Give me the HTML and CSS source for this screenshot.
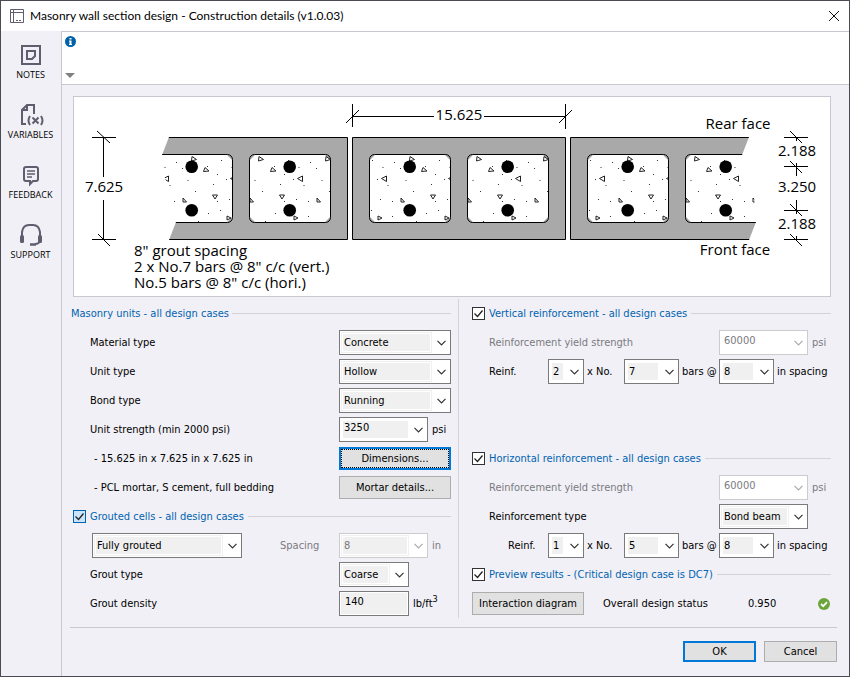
FILE: index.html
```html
<!DOCTYPE html>
<html lang="en">
<head>
<meta charset="utf-8">
<title>Masonry wall section design</title>
<link rel="stylesheet" href="styles.css">
</head>
<body>
<div class="window">
  <header class="titlebar">
    <svg class="app-icon" width="14" height="14" viewBox="0 0 14 14" fill="none" stroke="#5f5e6e"><path d="M.5.5h13v13H.5zM3.5.5v13M.5 3.5h13M6 11.5h2M9 11.5h2"/></svg>
    <h1>Masonry wall section design - Construction details (v1.0.03)</h1>
    <button class="close" aria-label="Close"><svg width="12" height="12" viewBox="0 0 12 12" stroke="#111"><path d="M1 1l10 10M11 1L1 11"/></svg></button>
  </header>
  <div class="body">
    <nav class="sidebar">
      <button><svg width="26" height="24" viewBox="0 0 26 24" fill="none" stroke="#5f5e6e" stroke-width="2"><path d="M4 3h18v18H4zM9 8h8v5l-3 3H9z"/></svg>NOTES</button>
      <button><svg width="26" height="24" viewBox="0 0 26 24" fill="none" stroke="#5f5e6e" stroke-width="2"><path d="M8 21H4V7l5-5h7v9M4 7h5V2"/><path d="M12 13q-3 4.500 0 9M23 13q3 4.500 0 9M14.500 14.500l6 6M20.500 14.500l-6 6"/></svg>VARIABLES</button>
      <button><svg width="26" height="24" viewBox="0 0 26 24" fill="none" stroke="#5f5e6e" stroke-width="2"><path d="M8 4h10q2 0 2 2v10q0 2-2 2h-3l-3 3v-3H8q-2 0-2-2V6q0-2 2-2z"/><path d="M9 8h8M9 11h8M9 14h5" stroke-width="1.500"/></svg>FEEDBACK</button>
      <button><svg width="26" height="24" viewBox="0 0 26 24" fill="none" stroke="#5f5e6e" stroke-width="2"><path d="M4 13V9q1-7 7-7h4q6 0 7 7v4M22 18q-1 3-5 3"/><rect x="2" y="12" width="4" height="8" rx="1.500" fill="#5f5e6e" stroke="none"/><rect x="20" y="12" width="4" height="8" rx="1.500" fill="#5f5e6e" stroke="none"/><path d="M12 21.500h6" stroke-width="2.500"/></svg>SUPPORT</button>
    </nav>
    <main>
      <section class="info">
        <svg width="11" height="11" viewBox="0 0 11 11"><circle cx="5.500" cy="5.500" r="5.500" fill="#0060a8"/><path d="M4.500 2h2v1.500h-2zM4 4.500h2.500V8H7v1H4V8h.5V5.500H4z" fill="#fff"/></svg>
        <svg width="10" height="5" viewBox="0 0 10 5"><path d="M0 0h10L5 5z" fill="#808080"/></svg>
      </section>
      <div class="content">
        <figure class="diagram">
          <svg viewBox="74 97 756 199" role="img" aria-label="Wall section">
            <defs>
              <pattern id="grout" x="369" y="0" width="67" height="300" patternUnits="userSpaceOnUse">
                <g transform="translate(-369 0)">
                  <path fill="none" stroke="#222" d="M410 156.500L414.500 159.500 409.500 161zM423 167.500L427 171 421.500 171.500zM381.500 178.500L386.500 176V181.500zM430.500 195H435.500L433 199zM401 198L404.500 202H401zM378 216V220L382 218z"/>
                  <path stroke="#333" d="M372 160.500h1M382.500 167.500h1M394 162.500h1M400 168.500h1M377 179.500h1M387.500 185.500h1M405.500 180.500h1M413 191.500h1M425 166.500h1M431 184.500h1M416 154.500h1M380 199.500h1M392 201.500h1M371 210.500h1M392 216.500h1M416 221.500h1M426 213.500h1M435 201.500h1M435 174.500h1"/>
                </g>
              </pattern>
              <clipPath id="cut"><path d="M169 137L162 155Q161 176 170 188L176 222 169 240H749L756 222 754 195Q741 176 742 155L749 137z"/></clipPath>
              <g id="unit">
                <path fill="#a9a9a9" fill-rule="evenodd" d="M352.500 137.500h213v102h-213zM370 160v57l5 5h70l5-5v-57l-5-5h-70zM468 160v57l5 5h70l5-5v-57l-5-5h-70z"/>
                <path fill="none" stroke="#000" d="M352.500 137.500h213v102h-213z"/>
                <g fill="url(#grout)" stroke="#000"><rect x="369.500" y="154.500" width="81" height="68" rx="5"/><rect x="467.500" y="154.500" width="81" height="68" rx="5"/></g>
                <circle cx="409.700" cy="166.700" r="6.300"/><circle cx="409.700" cy="210.300" r="6.300"/><circle cx="507.700" cy="166.700" r="6.300"/><circle cx="507.700" cy="210.300" r="6.300"/>
              </g>
            </defs>
            <g clip-path="url(#cut)">
              <use href="#unit" x="-218"/><use href="#unit"/><use href="#unit" x="218"/>
            </g>
            <path fill="none" stroke="#000" d="M92 137.500h24M92 239.500h24M103.500 137v40M103.500 200v40M97 131l13 12M98 234l12 12
              M352.500 104v23M565.500 104v25M352 116.500h82M484 116.500h82M346 123l13-13M559 123l13-13
              M784 137.500h24M784 166.500h24M784 210.500h24M784 239.500h24M796.500 137v4M796.500 163v13M796.500 200v14M796.500 236v4M790 131l12 12M790 161l12 12M790 204l12 12M790 234l12 12"/>
            <g class="notes">
              <text x="104" y="192" text-anchor="middle">7.625</text>
              <text x="459" y="120" text-anchor="middle">15.625</text>
              <text x="738" y="129" text-anchor="middle">Rear face</text>
              <text x="735" y="255" text-anchor="middle">Front face</text>
              <text x="797" y="156" text-anchor="middle">2.188</text>
              <text x="797" y="192" text-anchor="middle">3.250</text>
              <text x="797" y="229" text-anchor="middle">2.188</text>
              <text x="134" y="256">8" grout spacing</text>
              <text x="134" y="272">2 x No.7 bars @ 8" c/c (vert.)</text>
              <text x="134" y="288">No.5 bars @ 8" c/c (hori.)</text>
            </g>
          </svg>
        </figure>
        <form class="form">
          <div class="column">
            <h2 class="heading"><span>Masonry units - all design cases</span></h2>
            <div class="row"><label for="material">Material type</label><div class="control"><select id="material"><option>Concrete</option></select></div></div>
            <div class="row"><label for="unit-type">Unit type</label><div class="control"><select id="unit-type"><option>Hollow</option></select></div></div>
            <div class="row"><label for="bond">Bond type</label><div class="control"><select id="bond"><option>Running</option></select></div></div>
            <div class="row"><label for="strength">Unit strength (min 2000 psi)</label><div class="control"><select id="strength" class="medium raised"><option>3250</option></select><span>psi</span></div></div>
            <div class="row"><span class="indent">- 15.625 in x 7.625 in x 7.625 in</span><div class="control"><button type="button" class="focused">Dimensions...</button></div></div>
            <div class="row"><span class="indent">- PCL mortar, S cement, full bedding</span><div class="control"><button type="button">Mortar details...</button></div></div>
            <div class="heading check hot"><input type="checkbox" id="grouted" checked><label for="grouted">Grouted cells - all design cases</label></div>
            <div class="row"><div class="split"><select id="cells" class="wide" aria-label="Grouted cells"><option>Fully grouted</option></select><label for="spacing" class="muted">Spacing</label></div><div class="control muted"><select id="spacing" class="medium" disabled><option>8</option></select><span>in</span></div></div>
            <div class="row"><label for="grout-type">Grout type</label><div class="control"><select id="grout-type" class="short"><option>Coarse</option></select></div></div>
            <div class="row"><label for="density">Grout density</label><div class="control"><input type="text" id="density" class="short" value="140"><span>lb/ft<sup>3</sup></span></div></div>
          </div>
          <div class="column right">
            <div class="heading check"><input type="checkbox" id="vertical" checked><label for="vertical">Vertical reinforcement - all design cases</label></div>
            <div class="row muted"><label for="v-yield">Reinforcement yield strength</label><div class="control"><select id="v-yield" class="medium raised plain" disabled><option>60000</option></select><span>psi</span></div></div>
            <div class="row bars"><label for="v-count">Reinf.</label><select id="v-count" class="narrow"><option>2</option></select><label for="v-size">x No.</label><select id="v-size" class="narrow"><option>7</option></select><label for="v-space">bars @</label><select id="v-space" class="narrow"><option>8</option></select><span>in spacing</span></div>
            <div class="row spacer"></div>
            <div class="row spacer"></div>
            <div class="heading check"><input type="checkbox" id="horizontal" checked><label for="horizontal">Horizontal reinforcement - all design cases</label></div>
            <div class="row muted"><label for="h-yield">Reinforcement yield strength</label><div class="control"><select id="h-yield" class="medium raised plain" disabled><option>60000</option></select><span>psi</span></div></div>
            <div class="row"><label for="h-type">Reinforcement type</label><div class="control"><select id="h-type" class="medium"><option>Bond beam</option></select></div></div>
            <div class="row bars inset"><label for="h-count">Reinf.</label><select id="h-count" class="narrow"><option>1</option></select><label for="h-size">x No.</label><select id="h-size" class="narrow"><option>5</option></select><label for="h-space">bars @</label><select id="h-space" class="narrow"><option>8</option></select><span>in spacing</span></div>
            <div class="heading check"><input type="checkbox" id="preview" checked><label for="preview">Preview results - (Critical design case is DC7)</label></div>
            <div class="row status"><button type="button">Interaction diagram</button><span>Overall design status</span><output>0.950</output><svg width="12" height="12" viewBox="0 0 12 12"><circle cx="6" cy="6" r="6" fill="#6ba539"/><path d="M3 6l2.200 2.200L9 4.200" fill="none" stroke="#fff" stroke-width="1.800"/></svg></div>
          </div>
        </form>
        <footer><button class="primary">OK</button><button>Cancel</button></footer>
      </div>
    </main>
  </div>
</div>
</body>
</html>
```
FILE: styles.css
```css
* { box-sizing: border-box; }
body {
  margin: 0;
  font: 11px/16px "DejaVu Sans Condensed", "DejaVu Sans", sans-serif;
  color: #000;
}
button, input, select { font: inherit; color: inherit; margin: 0; }
h1, h2, figure { margin: 0; font: inherit; }
.window {
  min-height: 100vh;
  display: flex;
  flex-direction: column;
  border: 1px solid #4c4b53;
  background: #f1f0f6;
}
.titlebar {
  height: 30px;
  display: flex;
  align-items: center;
  gap: 6px;
  padding: 0 9px;
  background: #fff;
}
.titlebar h1 { flex: 1; font: 12px/16px Lato, sans-serif; }
.close { display: flex; padding: 0; border: 0; background: none; }
.body { flex: 1; display: flex; }
.sidebar { width: 60px; display: flex; flex-direction: column; padding: 12px 1px 0 0; }
.sidebar button {
  height: 60px;
  padding: 0;
  border: 0;
  background: none;
  display: flex;
  flex-direction: column;
  align-items: center;
  font: 9px/16px "Open Sans", sans-serif;
}
main { flex: 1; min-width: 0; border-left: 1px solid #c8c7d2; }
.info {
  height: 54px;
  display: flex;
  flex-direction: column;
  justify-content: space-between;
  padding: 4px 3px 6px;
  border: solid #c8c7d2;
  border-width: 1px 0;
  background: #fff;
}
.content { padding: 11px 12px 0 8px; }
.diagram { margin: 0 6px 0 3px; border: 1px solid #c8c7d2; background: #fff; }
.diagram svg { display: block; width: 100%; }
.notes { font: 15px "Open Sans", sans-serif; }
.form {
  display: grid;
  grid-template-columns: 388px 1fr;
  gap: 13px;
  margin: 2px 6px 0 1px;
}
.column { border-right: 1px solid #d3d2d8; padding: 0 7px 0 0; }
.column.right { border: 0; padding: 0; }
.heading, .row { height: 29px; display: flex; align-items: center; }
.heading { color: #0063b1; gap: 3px; }
.heading::after { content: ""; flex: 1; height: 1px; background: #d3d2d8; }
.check { gap: 4px; }
.hot { padding-left: 2px; }
.row { padding-left: 19px; }
.right .row { padding-left: 17px; }
.row > :first-child { flex: 1; }
.control { width: 112px; display: flex; align-items: center; gap: 4px; }
.indent { padding-left: 4px; }
.muted { color: #7a7a7f; }
.split { display: flex; align-items: center; gap: 38px; padding-left: 2px; }
input[type="checkbox"] {
  appearance: none;
  width: 13px;
  height: 13px;
  border: 1px solid #333;
  background: #fff url("data:image/svg+xml,%3Csvg xmlns='http://www.w3.org/2000/svg' viewBox='0 0 11 11'%3E%3Cpath d='M1.500 5.500l3 3 5-6' fill='none' stroke='%23222' stroke-width='1.300'/%3E%3C/svg%3E") center / 11px;
}
.hot input[type="checkbox"] { border-color: #0063b1; background-color: #cce4f7; }
select {
  --fill: #f0f0f0;
  --line: #f0f0f0;
  --arrow: 23px;
  appearance: none;
  width: 100%;
  height: 25px;
  padding: 0 20px 0 4px;
  border: 1px solid #7a7a7a;
  border-radius: 0;
  background:
    url("data:image/svg+xml,%3Csvg xmlns='http://www.w3.org/2000/svg' viewBox='0 0 9 6'%3E%3Cpath d='M.5 .8l4 4 4-4' fill='none' stroke='%23333' stroke-width='1.200'/%3E%3C/svg%3E") right 4px center / 9px 6px no-repeat,
    linear-gradient(var(--fill), var(--fill)) 3px 3px / calc(100% - var(--arrow)) 17px no-repeat,
    linear-gradient(#fff, #fff) 2px 2px / calc(100% - 21px) 19px no-repeat,
    linear-gradient(var(--line), var(--line)) 1px 1px / calc(100% - 19px) 21px no-repeat #fff;
}
select:disabled {
  border-color: #ccc;
  opacity: 1;
  color: #7a7a7f;
  background-image:
    url("data:image/svg+xml,%3Csvg xmlns='http://www.w3.org/2000/svg' viewBox='0 0 9 6'%3E%3Cpath d='M.5 .8l4 4 4-4' fill='none' stroke='%23aaa' stroke-width='1.200'/%3E%3C/svg%3E"),
    linear-gradient(var(--fill), var(--fill)),
    linear-gradient(#fff, #fff),
    linear-gradient(var(--line), var(--line));
}
.medium { width: 89px; }
.short { width: 70px; }
.wide { width: 150px; }
.raised { padding-bottom: 4px; --arrow: 22px; --line: #fff; }
.plain { --fill: #fff; }
.narrow { --line: #fff; }
input[type="text"] {
  height: 25px;
  padding: 0 5px 5px;
  border: 1px solid #7a7a7a;
  background: #f0f0f0;
  box-shadow: inset 0 0 0 1px #fff;
}
sup { font-size: 9px; line-height: 0; }
.bars { display: grid; grid-template-columns: 59px 36px 40px 55px 40px 55px 1fr; white-space: nowrap; }
.bars > * + label, .bars > span { padding-left: 3px; }
.inset > :first-child { padding-left: 19px; }
.column button, footer button {
  width: 112px;
  height: 23px;
  padding: 0;
  border: 1px solid #adadad;
  background: #e1e1e1;
}
.column .focused { border: 2px solid #0078d7; outline: 1px dotted #000; outline-offset: -3px; }
.right .status { padding: 0 1px 0 0; }
.row.status > :first-child { flex: none; margin-right: 19px; }
.status output { flex: 1; padding-left: 40px; }
footer {
  display: flex;
  justify-content: flex-end;
  gap: 8px;
  margin-top: 9px;
  padding-top: 13px;
  border-top: 1px solid #c8c7d2;
}
footer button { width: 73px; height: 21px; }
footer .primary { border: 2px solid #0078d7; }
```
